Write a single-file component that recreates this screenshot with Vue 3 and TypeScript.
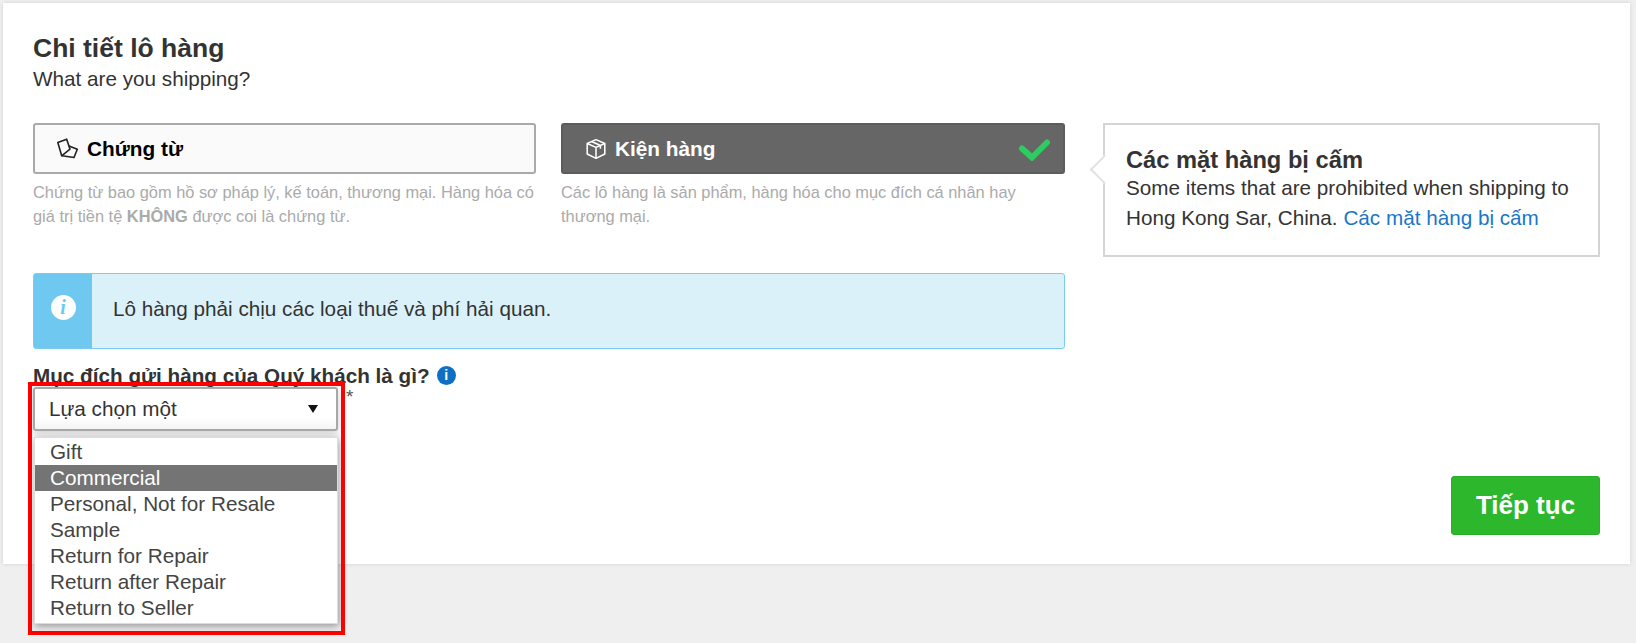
<script setup lang="ts">
/* Chi tiết lô hàng - form step with open purpose dropdown */
const purposes: string[] = [
  'Gift',
  'Commercial',
  'Personal, Not for Resale',
  'Sample',
  'Return for Repair',
  'Return after Repair',
  'Return to Seller',
]
const activePurpose = 'Commercial'
</script>

<template>
  <div class="page">
    <main class="card">
      <h1 class="title">Chi tiết lô hàng</h1>
      <p class="subtitle">What are you shipping?</p>

      <div class="columns">
        <section class="left">
          <div class="options">
            <div class="option">
              <div class="option__box">
                <svg class="option__icon" viewBox="0 0 22 22" fill="none" stroke="#222" stroke-width="1.6" stroke-linejoin="round">
                  <path d="M.8 4.500 9.700 1.200 13 11.200 4.700 17.800z" />
                  <path d="M12 8 20.300 11.200 17 19.500 5 17.800" />
                </svg>
                <span>Chứng từ</span>
              </div>
              <p class="option__hint">
                Chứng từ bao gồm hồ sơ pháp lý, kế toán, thương mại. Hàng hóa có giá trị tiền tệ <b>KHÔNG</b> được coi là chứng từ.
              </p>
            </div>

            <div class="option">
              <div class="option__box option__box--active">
                <svg class="option__icon" viewBox="0 0 20 20" fill="none" stroke="#fff" stroke-width="1.4" stroke-linejoin="round">
                  <path d="M10 1.500 18 5v9.500L10 18.500 2 14.500V5z" />
                  <path d="M2 5l8 3.500L18 5M10 8.500v10M6 3.200l8 3.600v3" />
                </svg>
                <span>Kiện hàng</span>
                <svg class="option__check" viewBox="0 0 32 24" fill="none">
                  <path d="M4 11.500 14 20.500 29 5.500" stroke="#2ecc60" stroke-width="6" stroke-linecap="round" stroke-linejoin="miter" />
                </svg>
              </div>
              <p class="option__hint">Các lô hàng là sản phẩm, hàng hóa cho mục đích cá nhân hay thương mại.</p>
            </div>
          </div>

          <div class="notice">
            <div class="notice__side">
              <span class="notice__dot">i</span>
            </div>
            <p class="notice__text">Lô hàng phải chịu các loại thuế và phí hải quan.</p>
          </div>

          <div class="field">
            <div class="field__label">
              Mục đích gửi hàng của Quý khách là gì?
              <span class="field__info">i</span>
            </div>
            <div class="select-wrap">
              <div class="select">
                <span>Lựa chọn một</span>
                <span class="select__arrow"></span>
              </div>
              <span class="select__star">*</span>
              <ul class="menu">
                <li
                  v-for="item in purposes"
                  :key="item"
                  class="menu__item"
                  :class="{ 'menu__item--active': item === activePurpose }"
                >
                  {{ item }}
                </li>
              </ul>
              <div class="highlight"></div>
            </div>
          </div>
        </section>

        <aside class="tip">
          <h2 class="tip__title">Các mặt hàng bị cấm</h2>
          <p class="tip__text">
            Some items that are prohibited when shipping to Hong Kong Sar, China.
            <a class="tip__link">Các mặt hàng bị cấm</a>
          </p>
        </aside>
      </div>

      <div class="actions">
        <button class="next" type="button">Tiếp tục</button>
      </div>
    </main>
  </div>
</template>

<style>
html,
body {
  background: #efefef;
}
</style>

<style scoped>
.page {
  box-sizing: border-box;
  min-height: 643px;
  padding: 3px 0 0 3px;
}

.card {
  box-sizing: border-box;
  width: 1627px;
  height: 561px;
  padding: 30px 30px 0;
  background: #fff;
  box-shadow: 0 0 4px rgba(0, 0, 0, 0.12);
  font-family: "Liberation Sans", Arial, sans-serif;
  color: #333;
}

.title {
  margin: 0;
  font-size: 26.5px;
  line-height: 30px;
  font-weight: 700;
}

.subtitle {
  margin: 2px 0 0;
  font-size: 20.7px;
  line-height: 28px;
}

.columns {
  display: grid;
  grid-template-columns: 1032px 497px;
  column-gap: 38px;
  margin-top: 30px;
}

.options {
  display: grid;
  grid-template-columns: 503px 504px;
  column-gap: 25px;
}

.option__box {
  box-sizing: border-box;
  display: flex;
  align-items: center;
  gap: 8px;
  height: 51px;
  padding: 0 22px;
  border: 2px solid #aaa;
  border-radius: 3px;
  background: #fafafa;
  color: #000;
  font-size: 20.8px;
  font-weight: 700;
}

.option__box--active {
  border-color: #5c5c5c;
  background: #666;
  color: #fff;
}

.option__icon {
  flex: none;
  width: 22px;
  height: 22px;
}

.option__check {
  width: 32px;
  height: 24px;
  margin-left: auto;
  margin-right: -9px;
}

.option__hint {
  margin: 6px 0 0;
  font-size: 16.4px;
  line-height: 24px;
  color: #aaa;
}

.notice {
  display: flex;
  box-sizing: border-box;
  height: 76px;
  margin-top: 45px;
  border: 1px solid #7bcdf0;
  border-radius: 3px;
  background: #daf1fa;
}

.notice__side {
  display: flex;
  justify-content: center;
  width: 58px;
  padding-top: 21px;
  background: #6fc8ef;
}

.notice__dot {
  width: 25px;
  height: 25px;
  border-radius: 50%;
  background: #fff;
  color: #6fc8ef;
  font-family: "Liberation Serif", serif;
  font-size: 20px;
  font-style: italic;
  font-weight: 700;
  line-height: 25px;
  text-align: center;
}

.notice__text {
  margin: 0;
  padding-left: 21px;
  font-size: 20.7px;
  line-height: 70px;
}

.field {
  margin-top: 15px;
}

.field__label {
  display: flex;
  align-items: center;
  gap: 7px;
  height: 23px;
  font-size: 20.7px;
  font-weight: 700;
}

.field__info {
  width: 19px;
  height: 19px;
  border-radius: 50%;
  background: #0e6fc4;
  color: #fff;
  font-size: 14px;
  line-height: 19px;
  text-align: center;
}

.select-wrap {
  position: relative;
  width: 305px;
}

.select {
  box-sizing: border-box;
  display: flex;
  align-items: center;
  justify-content: space-between;
  height: 44px;
  padding: 0 18px 0 14px;
  border: 2px solid #a8a8a8;
  border-radius: 3px;
  background: linear-gradient(#fff 70%, #f4f4f4);
  font-size: 20.7px;
  box-shadow: 0 2px 8px rgba(0, 0, 0, 0.2);
}

.select__arrow {
  width: 0;
  height: 0;
  border-left: 5px solid transparent;
  border-right: 5px solid transparent;
  border-top: 8px solid #111;
}

.select__star {
  position: absolute;
  left: 313px;
  top: -1px;
  font-size: 19px;
  color: #555;
}

.menu {
  position: absolute;
  left: 1px;
  right: 0;
  top: 50px;
  margin: 0;
  padding: 1px 0 2px;
  list-style: none;
  background: #fff;
  border: 1px solid #ddd;
  box-shadow: 1px 2px 8px rgba(0, 0, 0, 0.4);
  font-size: 20.7px;
}

.menu__item {
  height: 26px;
  padding-left: 15px;
  line-height: 26px;
  color: #444;
}

.menu__item--active {
  background: #747474;
  color: #fff;
}

.highlight {
  position: absolute;
  left: -5px;
  top: -5px;
  width: 317px;
  height: 253px;
  box-sizing: border-box;
  border: 4px solid #f00;
  pointer-events: none;
}

.tip {
  position: relative;
  box-sizing: border-box;
  height: 134px;
  padding: 22px 21px 0;
  border: 2px solid #d4d4d4;
}

.tip::before {
  content: "";
  position: absolute;
  left: -11px;
  top: 34px;
  width: 19px;
  height: 19px;
  background: #fff;
  border-left: 2px solid #e2e2e2;
  border-bottom: 2px solid #e2e2e2;
  transform: rotate(45deg);
}

.tip__title {
  position: relative;
  margin: 0;
  font-size: 23.7px;
  line-height: 26px;
  font-weight: 700;
}

.tip__text {
  position: relative;
  margin: 0;
  font-size: 20.7px;
  line-height: 30px;
}

.tip__link {
  color: #1976c8;
}

.actions {
  display: flex;
  justify-content: flex-end;
  margin-top: 45px;
}

.next {
  width: 149px;
  height: 59px;
  padding: 0;
  border: 1px solid #28b028;
  border-radius: 3px;
  background: #2cb72c;
  color: #fff;
  font-family: inherit;
  font-size: 26px;
  font-weight: 700;
}
</style>
